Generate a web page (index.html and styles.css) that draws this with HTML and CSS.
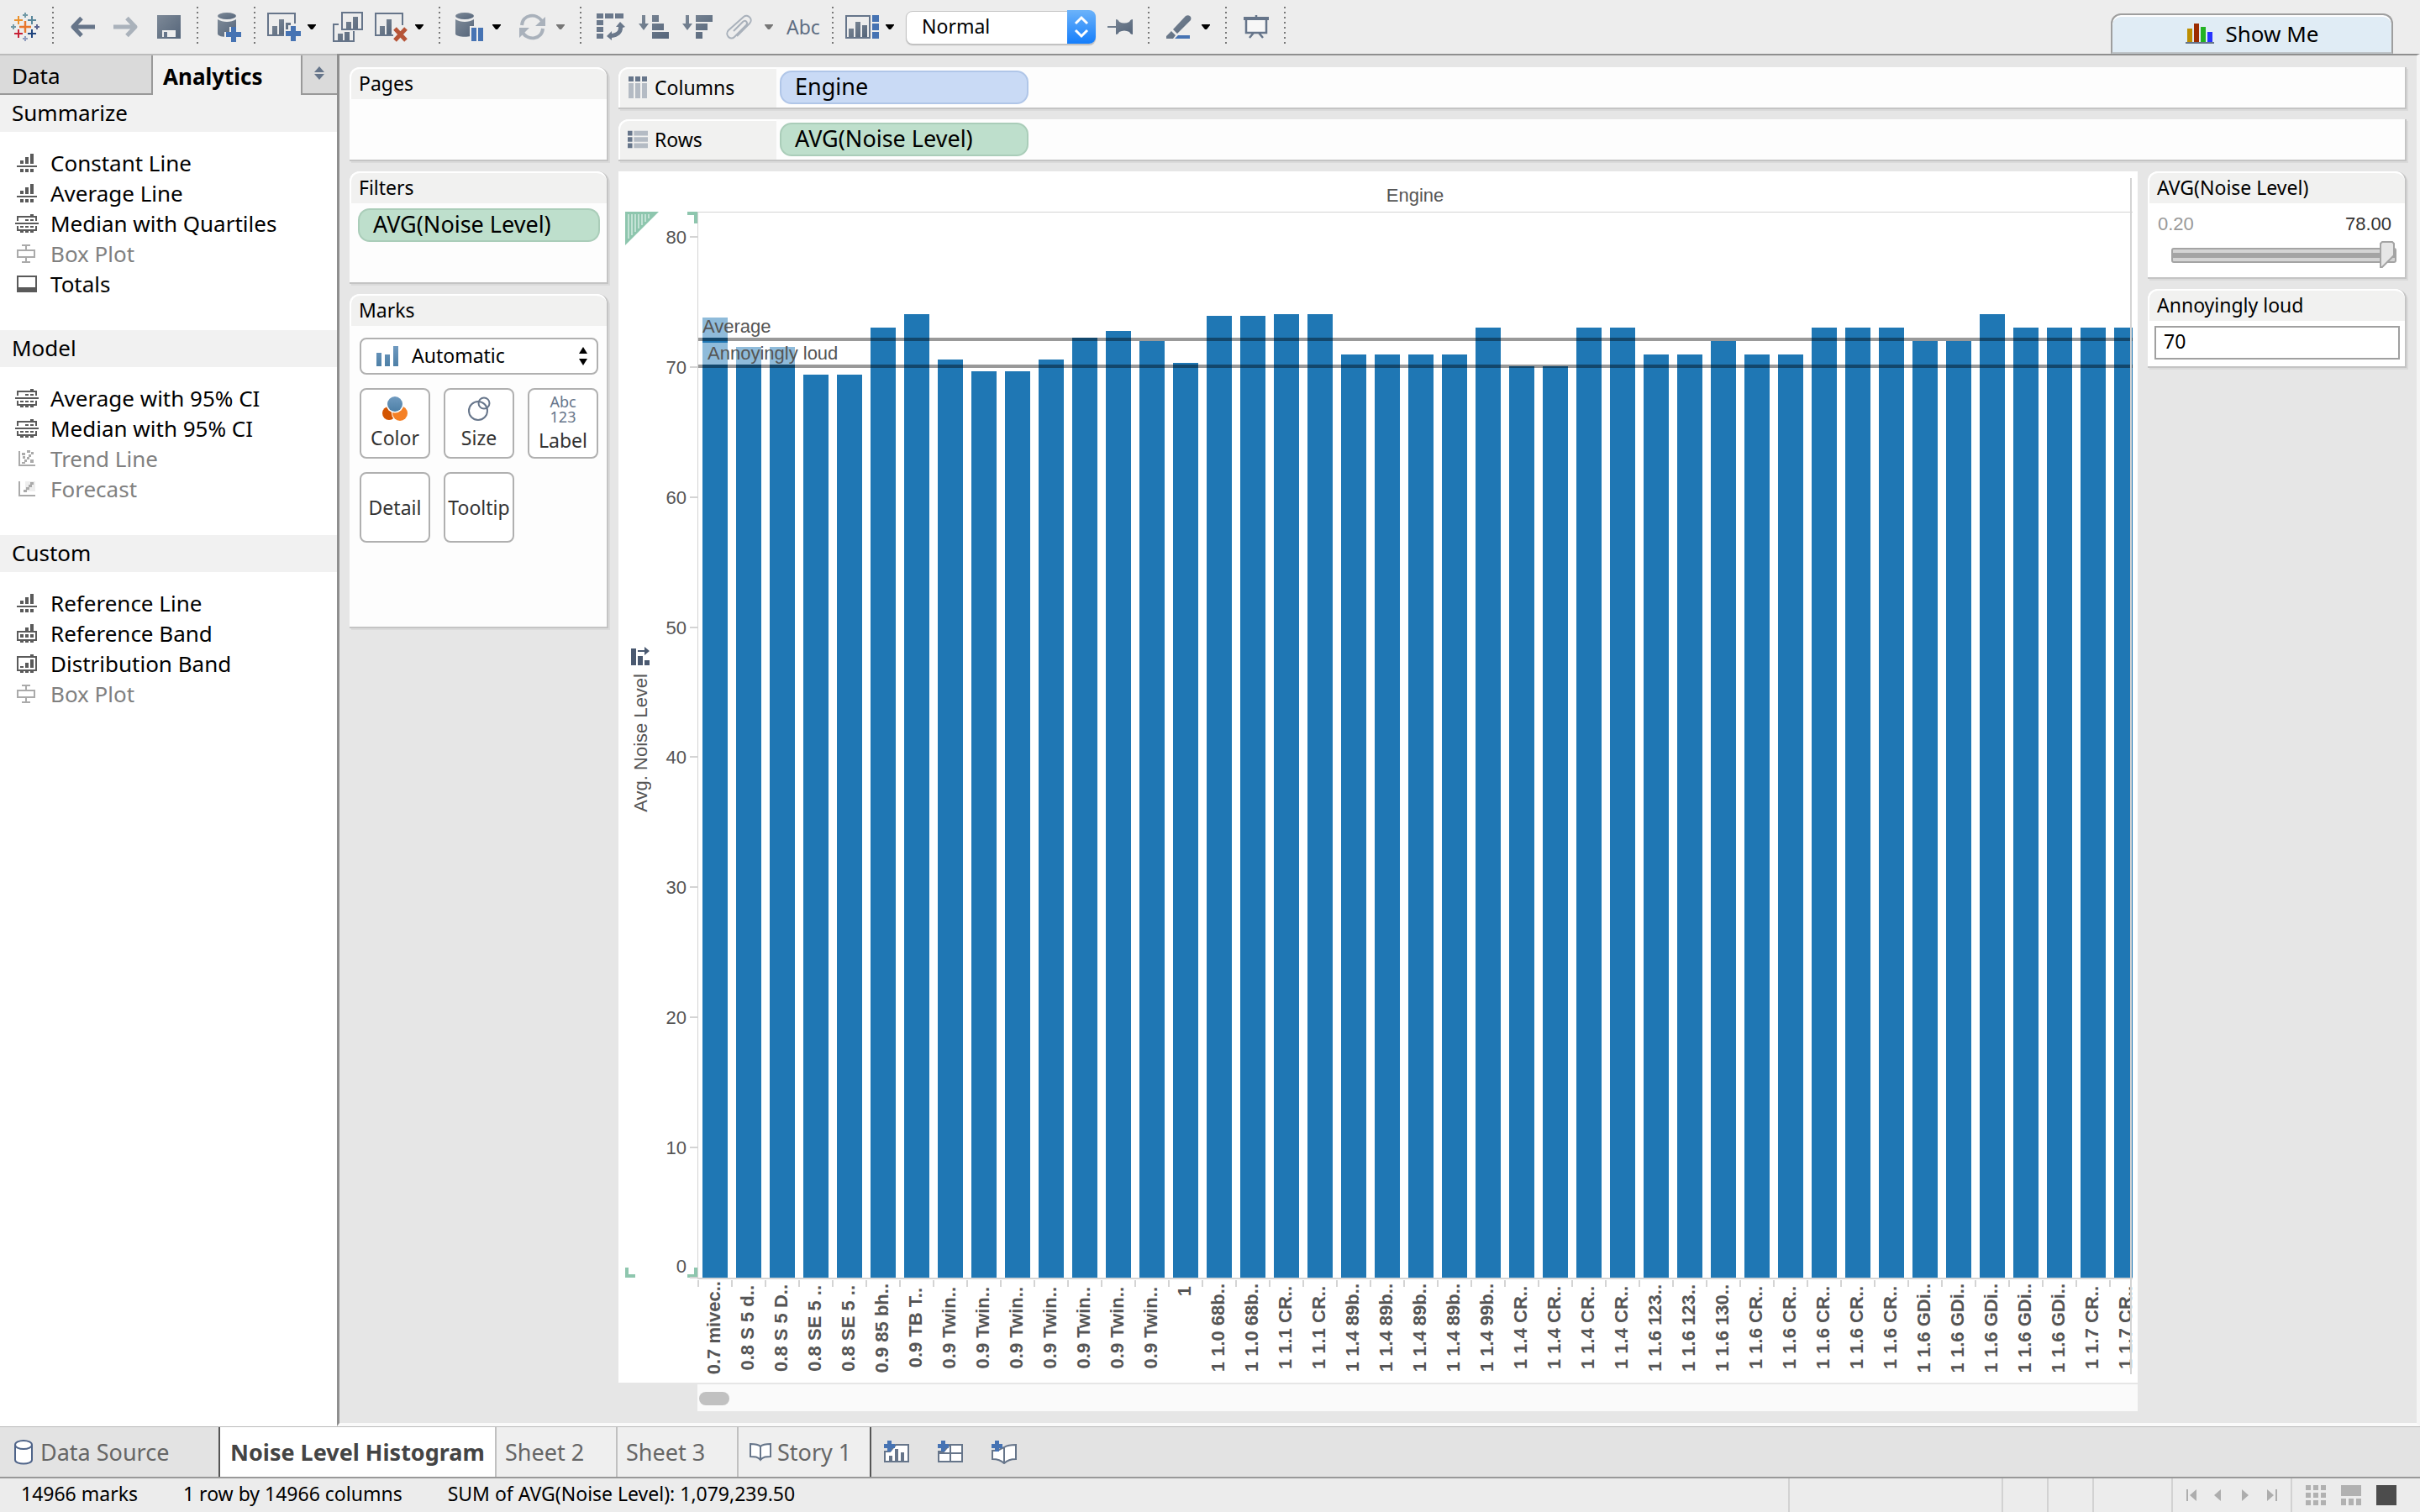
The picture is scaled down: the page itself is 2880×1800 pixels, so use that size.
FILE: index.html
```html
<!DOCTYPE html>
<html lang="en">
<head>
<meta charset="utf-8">
<title>Noise Level Histogram</title>
<link rel="stylesheet" href="styles.css">
</head>
<body>
<svg class="defs" aria-hidden="true">
  <defs>
    <linearGradient id="steel" x1="0" y1="0" x2="1" y2="1"><stop offset="0" stop-color="#7d8997"/><stop offset="1" stop-color="#55657a"/></linearGradient>
    <linearGradient id="blue" x1="0" y1="0" x2="0" y2="1"><stop offset="0" stop-color="#6f9ac0"/><stop offset="1" stop-color="#4d7fa6"/></linearGradient>
    <symbol id="i-line" viewBox="0 0 28 24"><path d="M6 9h4v4H6zM12 5h4v8h-4zM18 1h4v12h-4zM2 15h24v2H2zM6 19h4v4H6zM12 19h4v4h-4zM18 19h4v4h-4z"/></symbol>
    <symbol id="i-median" viewBox="0 0 28 24"><path d="M18 1h4v2h4v6h-2V5H4v4H2V3h16zM12 7h4v2h-4zM18 7h4v2h-4zM0 11h28v2H0zM6 15h4v2H6zM12 15h4v2h-4zM18 15h4v2h-4zM2 15h2v4h20v-4h2v6h-4v2h-4v-2h-2v2h-4v-2h-2v2H6v-2H2z"/></symbol>
    <symbol id="i-box" viewBox="0 0 28 24"><path fill-rule="evenodd" d="M8 1h10v2h-4v4h10v10H14v4h4v2H8v-2h4v-4H2V7h10V3H8zM4 9v6h18V9z"/></symbol>
    <symbol id="i-totals" viewBox="0 0 28 24"><path fill-rule="evenodd" d="M2 2h24v20H2zM4 4v12h20V4z"/></symbol>
    <symbol id="i-trend" viewBox="0 0 28 24"><path d="M4 3h2v16h18v2H4zM8 5h4v3H8zM14 2h4v3h-4zM19 4h3v3h-3zM16 7h3v3h-3zM14 10h3v3h-3zM11 13h3v3h-3zM9 9h3v3H9zM18 13h4v4h-4zM8 16h4v2H8z"/></symbol>
    <symbol id="i-forecast" viewBox="0 0 28 24"><path d="M4 3h2v16h18v2H4z"/><path d="M12 3h12v12H12z" opacity=".2"/><path d="M18 4h4v3h-2v3h-3v3h-3v3h-4v-3h3v-3h3V7h2z"/></symbol>
    <symbol id="i-band" viewBox="0 0 28 24"><path fill-rule="evenodd" d="M12 5h4v4h2V1h4v8h4v12h-4v2h-4v-2h-2v2h-4v-2h-2v2H6v-2H2V9h10zM4 11v8h20v-8z"/><path d="M6 13h4v4H6zM12 13h4v4h-4zM18 13h4v4h-4z"/></symbol>
    <symbol id="i-dist" viewBox="0 0 28 24"><path fill-rule="evenodd" d="M18 1h4v2h4v18h-4v2h-4v-2h-2v2h-4v-2h-2v2H6v-2H2V3h16zM4 5v14h20V5z"/><path d="M6 15h4v2H6zM12 11h4v6h-4zM18 7h4v10h-4z"/></symbol>
    <symbol id="i-caret" viewBox="0 0 10 6"><path d="M0 0h10v1L6 6H4L0 1z"/></symbol>
    <symbol id="i-book" viewBox="0 0 28 24"><path d="M14 5C11 2 7 2 2 2v15c5 0 9 0 12 4 3-4 7-4 12-4V2c-5 0-9 0-12 3zv15" fill="#fff" stroke="#66758a" stroke-width="2"/></symbol>
  </defs>
</svg>

<header class="toolbar">
  <div class="tools tools-first">
    <button class="tool" aria-label="Start page"><svg width="34" height="36" viewBox="0 0 34 36" fill="none" stroke-width="2"><path d="M17 11v14M10 18h14" stroke="#e8762c" stroke-width="2.4"/><path d="M9 5v10M4 10h10" stroke="#eb912c"/><path d="M25 5v10M20 10h10" stroke="#59879b"/><path d="M9 21v10M4 26h10" stroke="#c72035"/><path d="M25 21v10M20 26h10" stroke="#1f457e"/><path d="M17 1v6M14 4h6M3 15v6M0 18h6" stroke="#7199a6"/><path d="M31 15v6M28 18h6" stroke="#5c6692"/><path d="M17 29v6M14 32h6" stroke="#8f9bbd"/></svg></button>
  </div>
  <div class="tools wide">
    <button class="tool" aria-label="Undo"><svg width="30" height="26" viewBox="0 0 30 26" fill="none" stroke="#667589" stroke-width="5" stroke-linejoin="round"><path d="M4 13h26M14 2.500L4 13l10 10.500" stroke-linecap="butt"/></svg></button>
    <button class="tool" aria-label="Redo"><svg width="30" height="26" viewBox="0 0 30 26" fill="none" stroke="#aab2bb" stroke-width="5" stroke-linejoin="round"><path d="M0 13h26M16 2.500L26 13 16 23.500"/></svg></button>
    <button class="tool" aria-label="Save"><svg width="28" height="28" viewBox="0 0 28 28"><path fill="url(#steel)" d="M0 0h28v28H0z"/><path fill="#ededed" d="M6 18h16v8H6z"/><path fill="#66758a" d="M8 20h4v6H8z"/></svg></button>
  </div>
  <div class="tools source-tools">
    <button class="tool" aria-label="New data source"><svg width="34" height="36" viewBox="0 0 34 36"><path fill="url(#steel)" d="M5 9c6 4 16 4 22 0v21H17c-6 0-12-1-12-4z"/><ellipse cx="16" cy="5" rx="11" ry="4" fill="url(#steel)"/><path fill="#ededed" d="M19 18h11v6h4v12H13V24h6z"/><path fill="#4673b3" d="M21 18h6v6h6v6h-6v6h-6v-6h-6v-6h6z"/></svg></button>
  </div>
  <div class="tools">
    <button class="tool split" aria-label="New worksheet"><svg width="40" height="36" viewBox="0 0 40 36"><path fill="none" stroke="#66758a" stroke-width="2" d="M20 28H1V2h32v12"/><path fill="url(#steel)" d="M6 17h6v10H6zM14 9h6v18h-6zM22 13h6v3h-3v5h-3z"/><path fill="#4673b3" d="M28 17h6v6h6v6h-6v6h-6v-6h-6v-6h6z"/></svg><svg class="caret"><use href="#i-caret"/></svg></button>
    <button class="tool" aria-label="Duplicate"><svg width="42" height="36" viewBox="0 0 42 36"><path fill="none" stroke="#66758a" stroke-width="2" d="M17 1h24v20H17zM13 15H7v20h24V23"/><path fill="url(#steel)" d="M22 12h6v8h-6zM30 6h6v14h-6zM12 26h6v8h-6zM20 24h6v10h-6z"/></svg></button>
    <button class="tool split" aria-label="Clear sheet"><svg width="40" height="36" viewBox="0 0 40 36"><path fill="none" stroke="#66758a" stroke-width="2" d="M22 28H1V2h32v14"/><path fill="url(#steel)" d="M6 17h6v10H6zM14 9h6v18h-6z"/><path stroke="#b65437" stroke-width="5" d="M24 20l13 14M37 20L24 34"/></svg><svg class="caret"><use href="#i-caret"/></svg></button>
  </div>
  <div class="tools spaced">
    <button class="tool split" aria-label="Pause updates"><svg width="36" height="36" viewBox="0 0 36 36"><path fill="url(#steel)" d="M0 9c6 4 16 4 22 0v17c0 5-22 5-22 0z"/><ellipse cx="11" cy="5" rx="11" ry="4" fill="url(#steel)"/><path fill="#ededed" d="M17 17h17v19H17z"/><path fill="#4673b3" d="M19 19h6v16h-6zM27 19h6v16h-6z"/></svg><svg class="caret"><use href="#i-caret"/></svg></button>
    <button class="tool split off" aria-label="Refresh"><svg width="36" height="32" viewBox="0 0 36 32" fill="none" stroke="#a9b1bb" stroke-width="4"><path d="M3 14C4 1 20-1 27 9M28 18C27 31 11 33 4 23"/><path fill="#a9b1bb" stroke="none" d="M31 4v11H19zM0 29V17h12z"/></svg><svg class="caret"><use href="#i-caret"/></svg></button>
  </div>
  <div class="tools mid">
    <button class="tool" aria-label="Swap"><svg width="34" height="34" viewBox="0 0 34 34"><path fill="#6a788b" d="M0 1h8v6H0zM10 1h10v6H10zM22 1h10v6H22zM0 9h8v6H0zM0 17h8v6H0zM0 25h8v6H0zM28 11l6 6-3 1c0 7-5 11-13 12v3l-6-5 6-6v3c6-1 8-3 8-8h-3z"/></svg></button>
    <button class="tool" aria-label="Sort ascending"><svg width="36" height="28" viewBox="0 0 36 28"><path fill="url(#steel)" d="M4 0h4v10h4l-6 8-6-8h4zM16 0h8v8h-8zM16 10h14v8H16zM16 20h20v8H16z"/></svg></button>
    <button class="tool" aria-label="Sort descending"><svg width="36" height="28" viewBox="0 0 36 28"><path fill="url(#steel)" d="M4 0h4v10h4l-6 8-6-8h4zM16 0h20v8H16zM16 10h14v8H16zM16 20h8v8h-8z"/></svg></button>
    <button class="tool split off" aria-label="Group"><svg width="38" height="30" viewBox="0 0 38 30" fill="none" stroke="#a9b1bb" stroke-width="2"><path d="M13 26L28 11c5-5-2-12-7-8L3 19c-5 5 2 13 7 8l14-14c3-3-1-7-4-4L9 20"/></svg><svg class="caret"><use href="#i-caret"/></svg></button>
    <button class="tool abc">Abc</button>
  </div>
  <div class="tools">
    <button class="tool split" aria-label="Show cards"><svg width="40" height="28" viewBox="0 0 40 28"><path fill="none" stroke="#66758a" stroke-width="2" d="M1 1h28v26H1z"/><path fill="url(#steel)" d="M4 16h6v10H4zM12 8h6v18h-6zM20 12h6v14h-6z"/><path fill="#4673b3" d="M32 0h8v8h-8zM32 10h8v8h-8zM32 20h8v8h-8z"/></svg><svg class="caret"><use href="#i-caret"/></svg></button>
    <div class="fit"><select aria-label="Fit"><option>Normal</option></select><svg width="34" height="40" viewBox="0 0 34 40"><path fill="none" stroke="#fff" stroke-width="3" d="M10 16l7-7 7 7M10 24l7 7 7-7"/></svg></div>
    <button class="tool" aria-label="Pin"><svg width="30" height="20" viewBox="0 0 30 20"><path fill="url(#steel)" d="M0 9h10V1c2 0 3 1 4 3 4 2 8 2 12 0 1-2 2-3 4-3v18c-2 0-3-1-4-3-4-2-8-2-12 0-1 2-2 3-4 3v-8H0z"/></svg></button>
  </div>
  <div class="tools even">
    <button class="tool split" aria-label="Highlight"><svg width="34" height="28" viewBox="0 0 34 28"><path fill="url(#steel)" d="M23 1c3-2 8 0 6 5L13 22l-5-5zM6 19l5 5-3 4H0v-3z"/><path fill="#4673b3" d="M14 24h14v4H10z"/></svg><svg class="caret"><use href="#i-caret"/></svg></button>
  </div>
  <div class="tools even">
    <button class="tool" aria-label="Presentation mode"><svg width="30" height="28" viewBox="0 0 30 28"><path fill="#f7f7f7" d="M3 6h24v15H3z"/><path fill="none" stroke="#66758a" stroke-width="2.500" d="M3 4v17h24V4M12 21l-5 6M18 21l5 6M15 0v3"/><path fill="#66758a" d="M0 2h30v4H0z"/></svg></button>
  </div>
  <button class="show-me"><svg width="34" height="24" viewBox="0 0 34 24"><path fill="#bd8e00" d="M2 6h6v16H2z"/><path fill="#9c2c00" d="M10 0h6v22h-6z"/><path fill="#23b223" d="M18 4h6v18h-6z"/><path fill="#2733ff" d="M26 10h6v12h-6z"/><path fill="#66758a" d="M0 22h34v2H0z"/></svg>Show Me</button>
</header>

<main class="main">
  <aside class="side">
    <nav class="side-tabs">
      <button>Data</button>
      <button class="active">Analytics</button>
      <button class="toggle" aria-label="Pane options"><svg width="12" height="16" viewBox="0 0 12 16"><path fill="#66758a" d="M0 7l6-7 6 7zM0 9h12l-6 7z"/></svg></button>
    </nav>
    <h2>Summarize</h2>
    <ul>
      <li><svg><use href="#i-line"/></svg>Constant Line</li>
      <li><svg><use href="#i-line"/></svg>Average Line</li>
      <li><svg><use href="#i-median"/></svg>Median with Quartiles</li>
      <li class="off"><svg><use href="#i-box"/></svg>Box Plot</li>
      <li><svg><use href="#i-totals"/></svg>Totals</li>
    </ul>
    <h2>Model</h2>
    <ul>
      <li><svg><use href="#i-median"/></svg>Average with 95% CI</li>
      <li><svg><use href="#i-median"/></svg>Median with 95% CI</li>
      <li class="off"><svg><use href="#i-trend"/></svg>Trend Line</li>
      <li class="off"><svg><use href="#i-forecast"/></svg>Forecast</li>
    </ul>
    <h2>Custom</h2>
    <ul>
      <li><svg><use href="#i-line"/></svg>Reference Line</li>
      <li><svg><use href="#i-band"/></svg>Reference Band</li>
      <li><svg><use href="#i-dist"/></svg>Distribution Band</li>
      <li class="off"><svg><use href="#i-box"/></svg>Box Plot</li>
    </ul>
  </aside>

  <section class="workspace">
    <div class="cards">
      <section class="card pages"><h3>Pages</h3></section>
      <section class="card filters"><h3>Filters</h3><button class="pill green">AVG(Noise Level)</button></section>
      <section class="card marks">
        <h3>Marks</h3>
        <div class="marks-body">
          <div class="mark-type">
            <svg width="26" height="24" viewBox="0 0 26 24"><path fill="url(#blue)" d="M0 8h6v16H0zM10 10h6v14h-6zM20 0h6v24h-6z"/></svg>
            <select aria-label="Mark type"><option>Automatic</option></select>
            <svg width="10" height="22" viewBox="0 0 10 22"><path d="M0 8l5-8 5 8zM0 14h10l-5 8z"/></svg>
          </div>
          <div class="mark-buttons">
            <button><svg width="30" height="30" viewBox="0 0 30 30"><circle cx="8" cy="20" r="8" fill="#d35400"/><circle cx="21" cy="20" r="10" fill="#fff"/><circle cx="21" cy="20" r="9" fill="#f58025"/><circle cx="15" cy="9" r="10.500" fill="#fff"/><circle cx="15" cy="9" r="9" fill="url(#blue)"/></svg>Color</button>
            <button><svg width="30" height="30" viewBox="0 0 30 30" fill="none" stroke="#66758a" stroke-width="2"><circle cx="14" cy="17" r="11"/><circle cx="21" cy="8" r="6.500"/></svg>Size</button>
            <button><span class="abc123">Abc<br>123</span>Label</button>
            <button>Detail</button>
            <button>Tooltip</button>
          </div>
        </div>
      </section>
    </div>

    <div class="sheet">
      <section class="shelf">
        <h3><svg width="22" height="26" viewBox="0 0 22 26"><path fill="#66758a" d="M0 0h6v6H0zM8 0h6v6H8zM16 0h6v6h-6z"/><path fill="#b4bbc4" d="M0 8h6v18H0zM8 8h6v18H8zM16 8h6v18h-6z"/></svg>Columns</h3>
        <button class="pill blue">Engine</button>
      </section>
      <section class="shelf">
        <h3><svg width="26" height="22" viewBox="0 0 26 22"><path fill="#66758a" d="M0 0h6v6H0zM0 8h6v6H0zM0 16h6v6H0z"/><path fill="#b4bbc4" d="M8 0h18v6H8zM8 8h18v6H8zM8 16h18v6H8z"/></svg>Rows</h3>
        <button class="pill green">AVG(Noise Level)</button>
      </section>

      <div class="view">
        <div class="view-left">
          <figure class="chart">
            <figcaption>Engine</figcaption>
            <div class="axis">
              <svg class="corner" width="40" height="40" viewBox="0 0 40 40"><path fill="#8ec6ae" d="M0 0h40L0 40z"/><path stroke="#d6ebe2" stroke-width="1.500" d="M4 3v29M8 3v25M12 3v21M16 3v17M20 3v13M24 3v9M28 3v5"/></svg>
              <i class="bracket top"></i><i class="bracket bottom"></i><i class="bracket bottom-left"></i>
              <div class="axis-title"><svg width="22" height="22" viewBox="0 0 22 22"><path fill="#4a5970" d="M0 2h6v20H0zM8 11h6v11H8zM16 16h6v6h-6zM8 4h8V0l6 5-6 5V6H8z"/></svg><span>Avg. Noise Level</span></div>
            </div>
            <div class="plot" id="plot">
              <div class="bars" id="bars"></div>
              <div class="ref average"><span>Average</span></div>
              <div class="ref loud"><span>Annoyingly loud</span></div>
            </div>
            <div class="labels" id="labels"></div>
          </figure>
          <div class="scroll"><div class="thumb"></div></div>
        </div>
        <div class="legends">
          <section class="card">
            <h3>AVG(Noise Level)</h3>
            <div class="range">
              <div class="range-ends"><span>0.20</span><output>78.00</output></div>
              <input type="range" min="0.2" max="78" step="0.1" value="78" aria-label="AVG(Noise Level)">
            </div>
          </section>
          <section class="card">
            <h3><label for="loud">Annoyingly loud</label></h3>
            <div class="param"><input id="loud" type="text" value="70"></div>
          </section>
        </div>
      </div>
    </div>
  </section>
</main>

<nav class="sheet-tabs">
  <button class="source"><svg width="22" height="30" viewBox="0 0 22 30"><path fill="#fff" stroke="#4f6489" stroke-width="2" d="M1 6v18c0 6 20 6 20 0V6"/><ellipse cx="11" cy="6" rx="10" ry="5" fill="#fff" stroke="#4f6489" stroke-width="2"/></svg>Data Source</button>
  <button class="tab active">Noise Level Histogram</button>
  <button class="tab">Sheet 2</button>
  <button class="tab">Sheet 3</button>
  <button class="tab story"><svg width="28" height="24"><use href="#i-book"/></svg>Story 1</button>
  <button class="new" aria-label="New worksheet"><svg width="30" height="28" viewBox="0 0 30 28"><path fill="#fff" stroke="#66758a" stroke-width="2" d="M14 5h15v20H1V13h6z"/><path fill="#66758a" d="M6 18h4v6H6zM13 10h4v14h-4zM20 14h4v10h-4z"/><path fill="#4673b3" d="M4 0h5v4h4v5H9v4H4V9H0V4h4z"/></svg></button>
  <button class="new" aria-label="New dashboard"><svg width="30" height="28" viewBox="0 0 30 28"><path fill="#fff" stroke="#66758a" stroke-width="2" d="M14 5h15v20H1V13h6zM1 15h28M15 5v20"/><path fill="#4673b3" d="M4 0h5v4h4v5H9v4H4V9H0V4h4z"/></svg></button>
  <button class="new" aria-label="New story"><svg width="30" height="28" viewBox="0 0 30 28"><path fill="#fff" stroke="#66758a" stroke-width="2" d="M15 8c3-2 8-3 14-3v17c-5 0-10 1-14 5-4-4-9-5-14-5V12h6zv19"/><path fill="#4673b3" d="M4 0h5v4h4v5H9v4H4V9H0V4h4z"/></svg></button>
</nav>

<footer class="status">
  <span>14966 marks</span><span>1 row by 14966 columns</span><span>SUM of AVG(Noise Level): 1,079,239.50</span>
  <div class="cells"><i class="c1"></i><i class="c2"></i><i class="c2"></i><i class="c3"></i>
    <div class="pager">
      <button aria-label="First"><svg width="14" height="14"><path d="M0 0h2v14H0zM12 0v14L4 7z"/></svg></button>
      <button aria-label="Previous"><svg width="14" height="14"><path d="M9 0v14L1 7z"/></svg></button>
      <button aria-label="Next"><svg width="14" height="14"><path d="M2 0v14l8-7z"/></svg></button>
      <button aria-label="Last"><svg width="14" height="14"><path d="M10 0h2v14h-2zM0 0v14l8-7z"/></svg></button>
    </div>
    <div class="modes">
      <button aria-label="Sheet sorter"><svg width="24" height="24"><path d="M0 0h6v6H0zM9 0h6v6H9zM18 0h6v6h-6zM0 9h6v6H0zM9 9h6v6H9zM18 9h6v6h-6zM0 18h6v6H0zM9 18h6v6H9zM18 18h6v6h-6z"/></svg></button>
      <button aria-label="Filmstrip"><svg width="24" height="24"><path d="M0 0h24v13H0zM0 16h6v8H0zM9 16h6v8H9zM18 16h6v8h-6z"/></svg></button>
      <button class="on" aria-label="Tabs"><svg width="24" height="24"><path d="M0 0h24v24H0z"/></svg></button>
    </div>
  </div>
</footer>
<script src="script.js"></script>
</body>
</html>
```
FILE: styles.css
```css
* { box-sizing: border-box; }
body {
  margin: 0;
  height: 100vh;
  display: flex;
  flex-direction: column;
  overflow: hidden;
  background: #ededed;
  color: #000;
  font-family: "Noto Sans", "Open Sans", sans-serif;
  font-size: 26px;
}
button, select, input { font: inherit; color: inherit; margin: 0; }
button { border: 0; padding: 0; background: none; }
h2, h3, ul, figure { margin: 0; padding: 0; font-weight: 400; }
svg { flex: none; display: block; }
.defs { position: absolute; width: 0; height: 0; }

/* toolbar */
.toolbar { flex: none; height: 64px; display: flex; align-items: center; }
.tools {
  height: 64px;
  display: flex;
  align-items: center;
  gap: 14px;
  padding: 0 18px 0 14px;
  position: relative;
}
.tools::after {
  content: "";
  width: 2px;
  height: 46px;
  position: absolute;
  right: -2px;
  top: 8px;
  background: repeating-linear-gradient(#777 0 2px, transparent 2px 6px);
}
.tools + .tools { margin-left: 2px; }
.tools-first { padding: 0 15px 0 13px; }
.wide { gap: 22px; padding: 0 19px; }
.source-tools { padding: 0 14px 0 18px; }
.spaced { gap: 22px; padding: 0 18px; }
.mid { gap: 16px; padding: 0 12px 0 18px; }
.even { padding: 0 18px 0 20px; }
.tool { display: flex; align-items: center; }
.split { gap: 8px; }
.caret { width: 10px; height: 6px; fill: #000; }
.off .caret { fill: #777; }
.abc { width: 42px; color: #5f6e83; font-size: 23px; }
.fit { width: 226px; height: 40px; position: relative; }
.fit select {
  appearance: none;
  width: 100%;
  height: 100%;
  padding: 0 0 4px 18px;
  border: 1px solid #c4c4c4;
  border-radius: 8px;
  background: #fff;
  box-shadow: 0 1px 1px #bbb;
  font-size: 23px;
}
.fit svg {
  position: absolute;
  right: 0;
  top: 0;
  border-radius: 0 8px 8px 0;
  background: linear-gradient(#6cb3fa, #157efb);
}
.show-me {
  align-self: flex-end;
  margin: 0 32px 0 auto;
  width: 336px;
  height: 48px;
  display: flex;
  justify-content: center;
  align-items: center;
  gap: 14px;
  border: 2px solid #9e9e9e;
  border-bottom-color: #bfc5c9;
  border-radius: 12px 12px 0 0;
  background: #e0ecf5;
  box-shadow: inset 0 2px #fff;
}

/* analytics pane */
.main { flex: 1; min-height: 0; display: flex; border-bottom: 1px solid #bbb; }
.side { flex: none; width: 401px; background: #fff; border-top: 2px solid #bbb; }
.side-tabs { display: flex; height: 47px; }
.side-tabs button {
  width: 180px;
  padding: 2px 0 0 14px;
  text-align: left;
  background: #dadada;
  border-bottom: 2px solid #999;
}
.side-tabs .active {
  width: 180px;
  padding: 2px 0 0 12px;
  font-weight: 700;
  background: #f1f1f1;
  border: solid #999;
  border-width: 0 2px;
}
.side-tabs .toggle { flex: 1; padding: 0 0 4px 14px; }
.side h2 {
  height: 44px;
  padding-left: 14px;
  line-height: 42px;
  font-size: 26px;
  background: #f1f1f1;
}
.side ul { list-style: none; padding: 19px 0 37px; }
.side li {
  height: 36px;
  padding-left: 18px;
  display: flex;
  align-items: center;
  gap: 14px;
}
.side li svg { width: 28px; height: 24px; fill: #5a5a5a; }
.side li.off { color: #808080; }
.side li.off svg { fill: #aaa; }

/* workspace */
.workspace {
  flex: 1;
  min-width: 0;
  display: flex;
  gap: 12px;
  padding: 14px 12px 0;
  background: #e6e6e6;
  border-left: 3px solid #8f8f8f;
  border-top: 2px solid #8f8f8f;
  border-right: 4px solid #f5f5f5;
  border-bottom: 4px solid #fafafa;
}
.card, .shelf {
  background: #fdfdfd;
  border: solid #c4c4c4;
  border-width: 0 2px 2px 0;
  border-radius: 12px 12px 0 0;
  box-shadow: 2px 2px #dadada;
}
.card h3 {
  height: 38px;
  padding-left: 9px;
  line-height: 34px;
  font-size: 23px;
  background: #f1f1f0;
  border: solid #fff;
  border-width: 2px 0 0 2px;
  border-radius: 12px 12px 0 0;
}
.cards { flex: none; width: 308px; display: flex; flex-direction: column; gap: 12px; }
.pages { height: 112px; }
.filters { height: 134px; }
.marks { height: 398px; }
.pill {
  display: block;
  height: 40px;
  padding: 0 16px 3px;
  text-align: left;
  line-height: 32px;
  font-size: 27px;
  border-radius: 14px;
}
.green { background: #bedfcc; border: 2px solid #aacdb9; }
.blue { background: #c9daf5; border: 2px solid #b0c6e8; }
.filters .pill { width: 288px; margin: 6px 0 0 10px; }
.marks-body { padding: 14px 0 0 12px; }
.mark-type { position: relative; width: 284px; margin-bottom: 16px; }
.mark-type select {
  appearance: none;
  display: block;
  width: 100%;
  height: 44px;
  padding: 0 60px 2px;
  border: 2px solid #b0b0b0;
  border-radius: 8px;
  background: #fff;
  font-size: 23px;
}
.mark-type svg { position: absolute; left: 20px; top: 10px; }
.mark-type select + svg { left: auto; right: 13px; top: 11px; }
.mark-buttons { display: grid; grid-template-columns: repeat(3, 84px); gap: 16px; }
.mark-buttons button {
  height: 84px;
  display: flex;
  flex-direction: column;
  align-items: center;
  justify-content: center;
  gap: 4px;
  border: 2px solid #b0b0b0;
  border-radius: 8px;
  background: #fff;
  color: #333;
  font-size: 23px;
  line-height: 30px;
  white-space: nowrap;
}
.abc123 { color: #66758a; font-size: 18px; line-height: 18px; }

.sheet { flex: 1; min-width: 0; display: flex; flex-direction: column; gap: 12px; }
.shelf { flex: none; height: 50px; display: flex; border-radius: 12px 0 0 0; border-top: 0; }
.shelf h3 {
  width: 188px;
  padding: 0 0 2px 9px;
  display: flex;
  align-items: center;
  gap: 8px;
  font-size: 23px;
  background: #f1f1f0;
  border: solid #fff;
  border-width: 2px 0 0 2px;
  border-radius: 12px 0 0 0;
}
.shelf h3 svg { width: 24px; }
.shelf .pill { width: 296px; margin: 4px 0 0 4px; }

.view { flex: 1; min-height: 0; display: flex; gap: 12px; }
.view-left { flex: 1; min-width: 0; display: flex; flex-direction: column; padding-bottom: 14px; }
.chart {
  flex: 1;
  min-height: 0;
  display: grid;
  grid-template: 48px 1fr 125px / 94px 1fr;
  padding-right: 6px;
  background: #fff;
  color: #555;
  font-family: "Liberation Sans", Arial, sans-serif;
  font-size: 22px;
  position: relative;
}
.chart::after {
  content: "";
  position: absolute;
  right: 7px;
  top: 8px;
  bottom: 10px;
  width: 2px;
  background: #d4d4d4;
}
figcaption { grid-column: 2; text-align: center; line-height: 58px; height: 48px; }
.axis { position: relative; }
.corner { position: absolute; left: 8px; top: 0; }
.bracket { position: absolute; width: 12px; height: 14px; border: 0 solid #8ec6ae; }
.bracket.top { right: 0; top: 0; border-width: 4px 4px 0 0; }
.bracket.bottom { right: 0; bottom: 0; height: 12px; border-width: 0 4px 4px 0; }
.bracket.bottom-left { left: 8px; bottom: 0; height: 12px; border-width: 0 0 4px 4px; }
.axis-title {
  height: 100%;
  padding: 518px 0 0 15px;
  display: flex;
  flex-direction: column;
  gap: 10px;
}
.axis-title span { writing-mode: vertical-rl; transform: rotate(180deg); line-height: 24px; width: 24px; }
.plot {
  position: relative;
  min-width: 0;
  border: 1px solid #d4d4d4;
  border-width: 1px 0 0 1px;
}
.tick { position: absolute; right: 100%; width: 10px; height: 2px; margin-bottom: -1px; background: #d4d4d4; }
.tick span { position: absolute; right: 14px; top: -10px; line-height: 24px; }
.tick.zero span { top: -24px; }
.bars { height: 100%; display: flex; align-items: flex-end; overflow: hidden; }
.bar {
  flex: none;
  width: 30px;
  margin: 0 5px;
  height: calc(var(--v) / 81.86 * 100%);
  background: #1f77b4;
}
.ref {
  position: absolute;
  left: 0;
  right: 0;
  height: 4px;
  background: rgba(0, 0, 0, .4);
}
.ref span {
  position: absolute;
  left: 5px;
  bottom: 4px;
  height: 26px;
  line-height: 26px;
  white-space: nowrap;
  background: rgba(255, 255, 255, .5);
}
.average { bottom: calc(72.15 / 81.86 * 100% - 3px); }
.loud { bottom: calc(70 / 81.86 * 100% - 1px); }
.loud span { padding-left: 6px; }
.labels {
  grid-column: 2;
  min-width: 0;
  display: flex;
  overflow: hidden;
  border-top: 2px solid #d4d4d4;
  font-weight: 700;
}
.label {
  flex: none;
  width: 40px;
  height: 116px;
  display: flex;
  align-items: center;
  justify-content: center;
  background: linear-gradient(#d4d4d4, #d4d4d4) 0 1px / 2px 8px no-repeat;
}
.label.short { align-items: flex-start; padding-top: 8px; }
.label span { writing-mode: vertical-rl; transform: rotate(180deg); line-height: 24px; white-space: nowrap; }
.scroll {
  flex: none;
  height: 32px;
  margin: 2px 0 0 94px;
  padding: 9px 2px;
  background: #fafafa;
}
.thumb { width: 36px; height: 16px; border-radius: 8px; background: #c1c1c1; }

.legends { flex: none; width: 308px; display: flex; flex-direction: column; gap: 12px; }
.legends .card { background: #fff; }
.range {
  height: 88px;
  padding: 10px 10px 0 12px;
}
.range-ends {
  display: flex;
  justify-content: space-between;
  padding-right: 6px;
  font: 22px/30px "Liberation Sans", Arial, sans-serif;
  color: #999;
}
.range-ends output { color: #333; }
.range input {
  appearance: none;
  display: block;
  width: 268px;
  height: 36px;
  margin: 4px 0 0 16px;
  background: none;
}
.range input::-webkit-slider-runnable-track {
  height: 18px;
  border: 2px solid #a4a4a4;
  border-radius: 3px;
  background: linear-gradient(#d4d4d4 4px, #a4a4a4 4px 10px, #d4d4d4 10px);
}
.range input::-webkit-slider-thumb {
  appearance: none;
  width: 18px;
  height: 32px;
  margin-top: -10px;
  border: 0;
  background: no-repeat url("data:image/svg+xml,%3Csvg xmlns='http://www.w3.org/2000/svg' width='18' height='32'%3E%3Cpath d='M1 3l2-2h12l2 2v14L3 31H1z' fill='%23e6e6e6' stroke='%23a4a4a4' stroke-width='2'/%3E%3C/svg%3E");
}
.param { padding: 6px 6px 8px 8px; }
.param input {
  display: block;
  width: 100%;
  height: 40px;
  padding: 0 9px 5px;
  border: 2px solid #a0a0a0;
  border-radius: 0;
  background: #fff;
  font-size: 23px;
}

/* sheet tabs */
.sheet-tabs {
  flex: none;
  height: 61px;
  display: flex;
  align-items: center;
  background: #e3e3e3;
  border-bottom: 2px solid #999;
  color: #666;
  font-size: 27px;
}
.source { width: 260px; height: 100%; display: flex; align-items: center; gap: 9px; padding-left: 17px; }
.tab {
  height: 100%;
  min-width: 144px;
  padding: 0 0 0 10px;
  text-align: left;
  background: #efefef;
  border-left: 2px solid #c0c0c0;
}
.tab.active {
  width: 329px;
  padding-left: 12px;
  background: #fff;
  color: #444;
  border-left: 2px solid #555;
  font-weight: 700;
  white-space: nowrap;
}
.story { width: 160px; display: flex; align-items: center; gap: 6px; padding-left: 12px; border-right: 2px solid #555; }
.new { margin-left: 34px; }
.story + .new { margin-left: 15px; }

/* status bar */
.status {
  flex: none;
  height: 40px;
  display: flex;
  align-items: center;
  gap: 54px;
  padding-left: 25px;
  background: #ececec;
  font-size: 23px;
  line-height: 36px;
  white-space: nowrap;
}
.status > span { height: 40px; }
.cells { flex: none; margin-left: auto; height: 100%; display: flex; }
.cells > * { border-left: 2px solid #d2d2d2; }
.c1 { width: 254px; }
.c2 { width: 54px; }
.c3 { width: 94px; }
.pager { width: 142px; display: flex; align-items: center; gap: 18px; padding-left: 16px; fill: #adadad; }
.modes { width: 154px; display: flex; align-items: center; gap: 18px; padding-left: 16px; fill: #b1b1b1; }
.modes .on { fill: #4c4c4c; }
```
FILE: script.js
```js
// [average noise level, engine] for the columns in view
const engines = [
  [73.8, '0.7 mivec..'], [71.5, '0.8 S 5 d..'], [71.5, '0.8 S 5 D..'], [69.4, '0.8 SE 5 ..'],
  [69.4, '0.8 SE 5 ..'], [73, '0.9 85 bh..'], [74.05, '0.9 TB T..'], [70.55, '0.9 Twin..'],
  [69.65, '0.9 Twin..'], [69.65, '0.9 Twin..'], [70.55, '0.9 Twin..'], [72.25, '0.9 Twin..'],
  [72.75, '0.9 Twin..'], [72, '0.9 Twin..'], [70.3, '1'], [73.9, '1 1.0 68b..'],
  [73.9, '1 1.0 68b..'], [74.05, '1 1.1 CR..'], [74.05, '1 1.1 CR..'], [70.95, '1 1.4 89b..'],
  [70.95, '1 1.4 89b..'], [70.95, '1 1.4 89b..'], [70.95, '1 1.4 89b..'], [73, '1 1.4 99b..'],
  [70.05, '1 1.4 CR..'], [70.05, '1 1.4 CR..'], [73, '1 1.4 CR..'], [73, '1 1.4 CR..'],
  [70.95, '1 1.6 123..'], [70.95, '1 1.6 123..'], [72, '1 1.6 130..'], [70.95, '1 1.6 CR..'],
  [70.95, '1 1.6 CR..'], [73, '1 1.6 CR..'], [73, '1 1.6 CR..'], [73, '1 1.6 CR..'],
  [72, '1 1.6 GDi..'], [72, '1 1.6 GDi..'], [74.05, '1 1.6 GDi..'], [73, '1 1.6 GDi..'],
  [73, '1 1.6 GDi..'], [73, '1 1.7 CR..'], [73, '1 1.7 CR..']
];
const AXIS_MAX = 81.86;

document.getElementById('bars').innerHTML = engines
  .map(([v]) => `<div class="bar" style="--v:${v}"></div>`).join('');
document.getElementById('labels').innerHTML = engines
  .map(([, name]) => `<div class="label${name.length < 2 ? ' short' : ''}"><span>${name}</span></div>`).join('');

let ticks = '';
for (let v = 0; v <= 80; v += 10) {
  ticks += `<div class="tick${v ? '' : ' zero'}" style="bottom:${v / AXIS_MAX * 100}%"><span>${v}</span></div>`;
}
document.getElementById('plot').insertAdjacentHTML('beforeend', ticks);
```
